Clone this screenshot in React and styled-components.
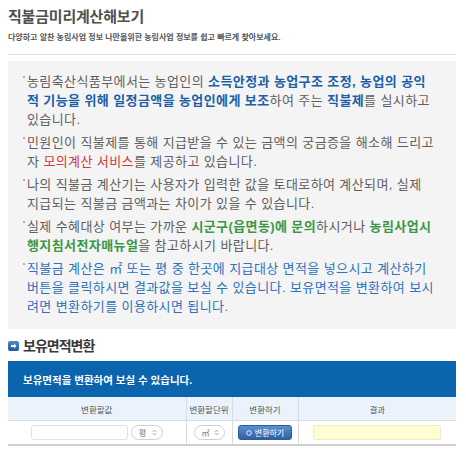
import React from 'react';
import styled, { createGlobalStyle } from 'styled-components';

const GlobalStyle = createGlobalStyle`
  body {
    margin: 8px;
    background: #fff;
    font-family: "Liberation Sans", "Noto Sans CJK KR", sans-serif;
  }
`;

const Page = styled.div`
  width: 448px;
`;

const Title = styled.h1`
  margin: 0;
  font-size: 15px;
  line-height: 18px;
  letter-spacing: -0.2px;
  font-weight: 700;
  color: #505050;
`;

const Subtitle = styled.p`
  margin: 6px 0 0;
  font-size: 8px;
  line-height: 12px;
  letter-spacing: 0;
  font-weight: 700;
  color: #555;
`;

const Divider = styled.hr`
  margin: 10px 0 0;
  border: 0;
  border-top: 1px solid #e2e2e2;
`;

const NoticeBox = styled.ul`
  list-style: none;
  margin: 6px 0 0;
  padding: 11px 10px 13px 19px;
  background: #f4f4f4;
  display: flex;
  flex-direction: column;
  gap: 4px;
`;

const Notice = styled.li`
  position: relative;
  font-size: 13px;
  line-height: 19px;
  letter-spacing: 0.4px;
  color: ${p => (p.$tone === 'blue' ? '#2f72ba' : '#606060')};

  &::before {
    content: '';
    position: absolute;
    left: -4px;
    top: 4px;
    width: 2px;
    height: 2px;
    border-radius: 1px;
    background: #9a9a9a;
  }
`;

const Em = styled.span`
  font-weight: ${p => (p.$bold ? 700 : 400)};
  color: ${p =>
    p.$color === 'blue' ? '#1d5fa7' : p.$color === 'red' ? '#d2383a' : '#3b9748'};
`;

const SectionHead = styled.h2`
  margin: 6px 0 0;
  display: flex;
  align-items: center;
  gap: 4px;
  font-size: 14px;
  line-height: 22px;
  letter-spacing: -1px;
  font-weight: 700;
  color: #3a3a3a;
`;

const Banner = styled.div`
  margin-top: 4px;
  height: 36px;
  padding-left: 15px;
  display: flex;
  align-items: center;
  background: #0b64ae;
  color: #fff;
  font-size: 10.5px;
  font-weight: 700;
  letter-spacing: 0;
`;

const Table = styled.table`
  width: 448px;
  border-collapse: collapse;
  table-layout: fixed;
  border-bottom: 2px solid #cfcfcf;
`;

const Th = styled.th`
  height: 23px;
  padding: 0;
  background: #eaf3fc;
  border-left: 1px solid #d6dde6;
  border-bottom: 1px solid #d6dde6;
  font-size: 8.5px;
  font-weight: 400;
  letter-spacing: 0;
  color: #555;

  &:first-child {
    border-left: 0;
  }
`;

const Td = styled.td`
  height: 23px;
  padding: 0;
  border-left: 1px solid #dadada;
  text-align: center;
  vertical-align: middle;

  &:first-child {
    border-left: 0;
  }
`;

const CellRow = styled.div`
  display: flex;
  justify-content: center;
  align-items: center;
  gap: 3px;
`;

const ValueInput = styled.input`
  box-sizing: border-box;
  width: 97px;
  height: 15px;
  padding: 0 4px;
  border: 1px solid #e2e2e2;
  border-radius: 3px;
  background: #fff;
  font-size: 9px;
  outline: none;
`;

const Picker = styled.div`
  box-sizing: border-box;
  width: ${p => p.$w}px;
  height: 15px;
  padding: 0 5px 0 7px;
  display: inline-flex;
  align-items: center;
  justify-content: space-between;
  border: 1px solid #cfcfcf;
  border-radius: 8px;
  background: #fff;
  font-size: 8px;
  color: #777;
`;

const ConvertButton = styled.button`
  box-sizing: border-box;
  width: 54px;
  height: 15px;
  padding: 0;
  display: inline-flex;
  align-items: center;
  justify-content: center;
  gap: 3px;
  border: 1px solid #2d5c98;
  border-radius: 3px;
  background: linear-gradient(#5d90d2, #2f5fa1);
  color: #fff;
  font-family: inherit;
  font-size: 8px;
  letter-spacing: 0;
`;

const ResultField = styled.div`
  box-sizing: border-box;
  width: 128px;
  height: 15px;
  margin: 0 auto;
  border: 1px solid #efeccd;
  border-radius: 2px;
  background: #fffdd2;
`;

const ArrowIcon = () => (
  <svg width="11" height="10" viewBox="0 0 11 10">
    <defs>
      <linearGradient id="hb" x1="0" y1="0" x2="0" y2="1">
        <stop offset="0" stopColor="#4f86cf" />
        <stop offset="1" stopColor="#1f5aa6" />
      </linearGradient>
    </defs>
    <rect x="0" y="0" width="11" height="10" rx="2" fill="url(#hb)" />
    <path d="M3 4h3V2.5L8.5 5 6 7.5V6H3z" fill="#fff" />
  </svg>
);

const UpDown = () => (
  <svg width="5" height="7" viewBox="0 0 5 7">
    <path d="M0.8 2.8L2.5 1.1 4.2 2.8M0.8 4.2L2.5 5.9 4.2 4.2" fill="none" stroke="#888" strokeWidth="0.8" />
  </svg>
);

const Ring = () => (
  <svg width="6" height="6" viewBox="0 0 6 6">
    <circle cx="3" cy="3" r="2.3" fill="none" stroke="#fff" strokeWidth="0.9" />
  </svg>
);

export default function App() {
  return (
    <Page>
      <GlobalStyle />
      <Title>직불금미리계산해보기</Title>
      <Subtitle>다양하고 알찬 농림사업 정보 나만을위한 농림사업 정보를 쉽고 빠르게 찾아보세요.</Subtitle>
      <Divider />

      <NoticeBox>
        <Notice>
          농림축산식품부에서는 농업인의{' '}
          <Em $bold $color="blue">
            소득안정과 농업구조 조정, 농업의 공익<br />적 기능을 위해 일정금액을 농업인에게 보조
          </Em>
          하여 주는 <Em $bold $color="blue">직불제</Em>를 실시하고<br />있습니다.
        </Notice>
        <Notice>
          민원인이 직불제를 통해 지급받을 수 있는 금액의 궁금증을 해소해 드리고<br />자{' '}
          <Em $color="red">모의계산 서비스</Em>를 제공하고 있습니다.
        </Notice>
        <Notice>
          나의 직불금 계산기는 사용자가 입력한 값을 토대로하여 계산되며, 실제<br />지급되는 직불금 금액과는 차이가 있을 수 있습니다.
        </Notice>
        <Notice>
          실제 수혜대상 여부는 가까운 <Em $bold $color="green">시군구(읍면동)에 문의</Em>하시거나{' '}
          <Em $bold $color="green">농림사업시<br />행지침서전자매뉴얼</Em>을 참고하시기 바랍니다.
        </Notice>
        <Notice $tone="blue">
          직불금 계산은 ㎡ 또는 평 중 한곳에 지급대상 면적을 넣으시고 계산하기<br />버튼을 클릭하시면 결과값을 보실 수 있습니다. 보유면적을 변환하여 보시<br />려면 변환하기를 이용하시면 됩니다.
        </Notice>
      </NoticeBox>

      <SectionHead>
        <ArrowIcon />
        보유면적변환
      </SectionHead>
      <Banner>보유면적을 변환하여 보실 수 있습니다.</Banner>

      <Table>
        <colgroup>
          <col style={{ width: 178 }} />
          <col style={{ width: 46 }} />
          <col style={{ width: 66 }} />
          <col style={{ width: 158 }} />
        </colgroup>
        <thead>
          <tr>
            <Th>변환할값</Th>
            <Th>변환할단위</Th>
            <Th>변환하기</Th>
            <Th>결과</Th>
          </tr>
        </thead>
        <tbody>
          <tr>
            <Td>
              <CellRow>
                <ValueInput type="text" />
                <Picker $w={32}>
                  평<UpDown />
                </Picker>
              </CellRow>
            </Td>
            <Td>
              <CellRow>
                <Picker $w={31}>
                  ㎡<UpDown />
                </Picker>
              </CellRow>
            </Td>
            <Td>
              <CellRow>
                <ConvertButton type="button">
                  <Ring />
                  변환하기
                </ConvertButton>
              </CellRow>
            </Td>
            <Td>
              <ResultField />
            </Td>
          </tr>
        </tbody>
      </Table>
    </Page>
  );
}
